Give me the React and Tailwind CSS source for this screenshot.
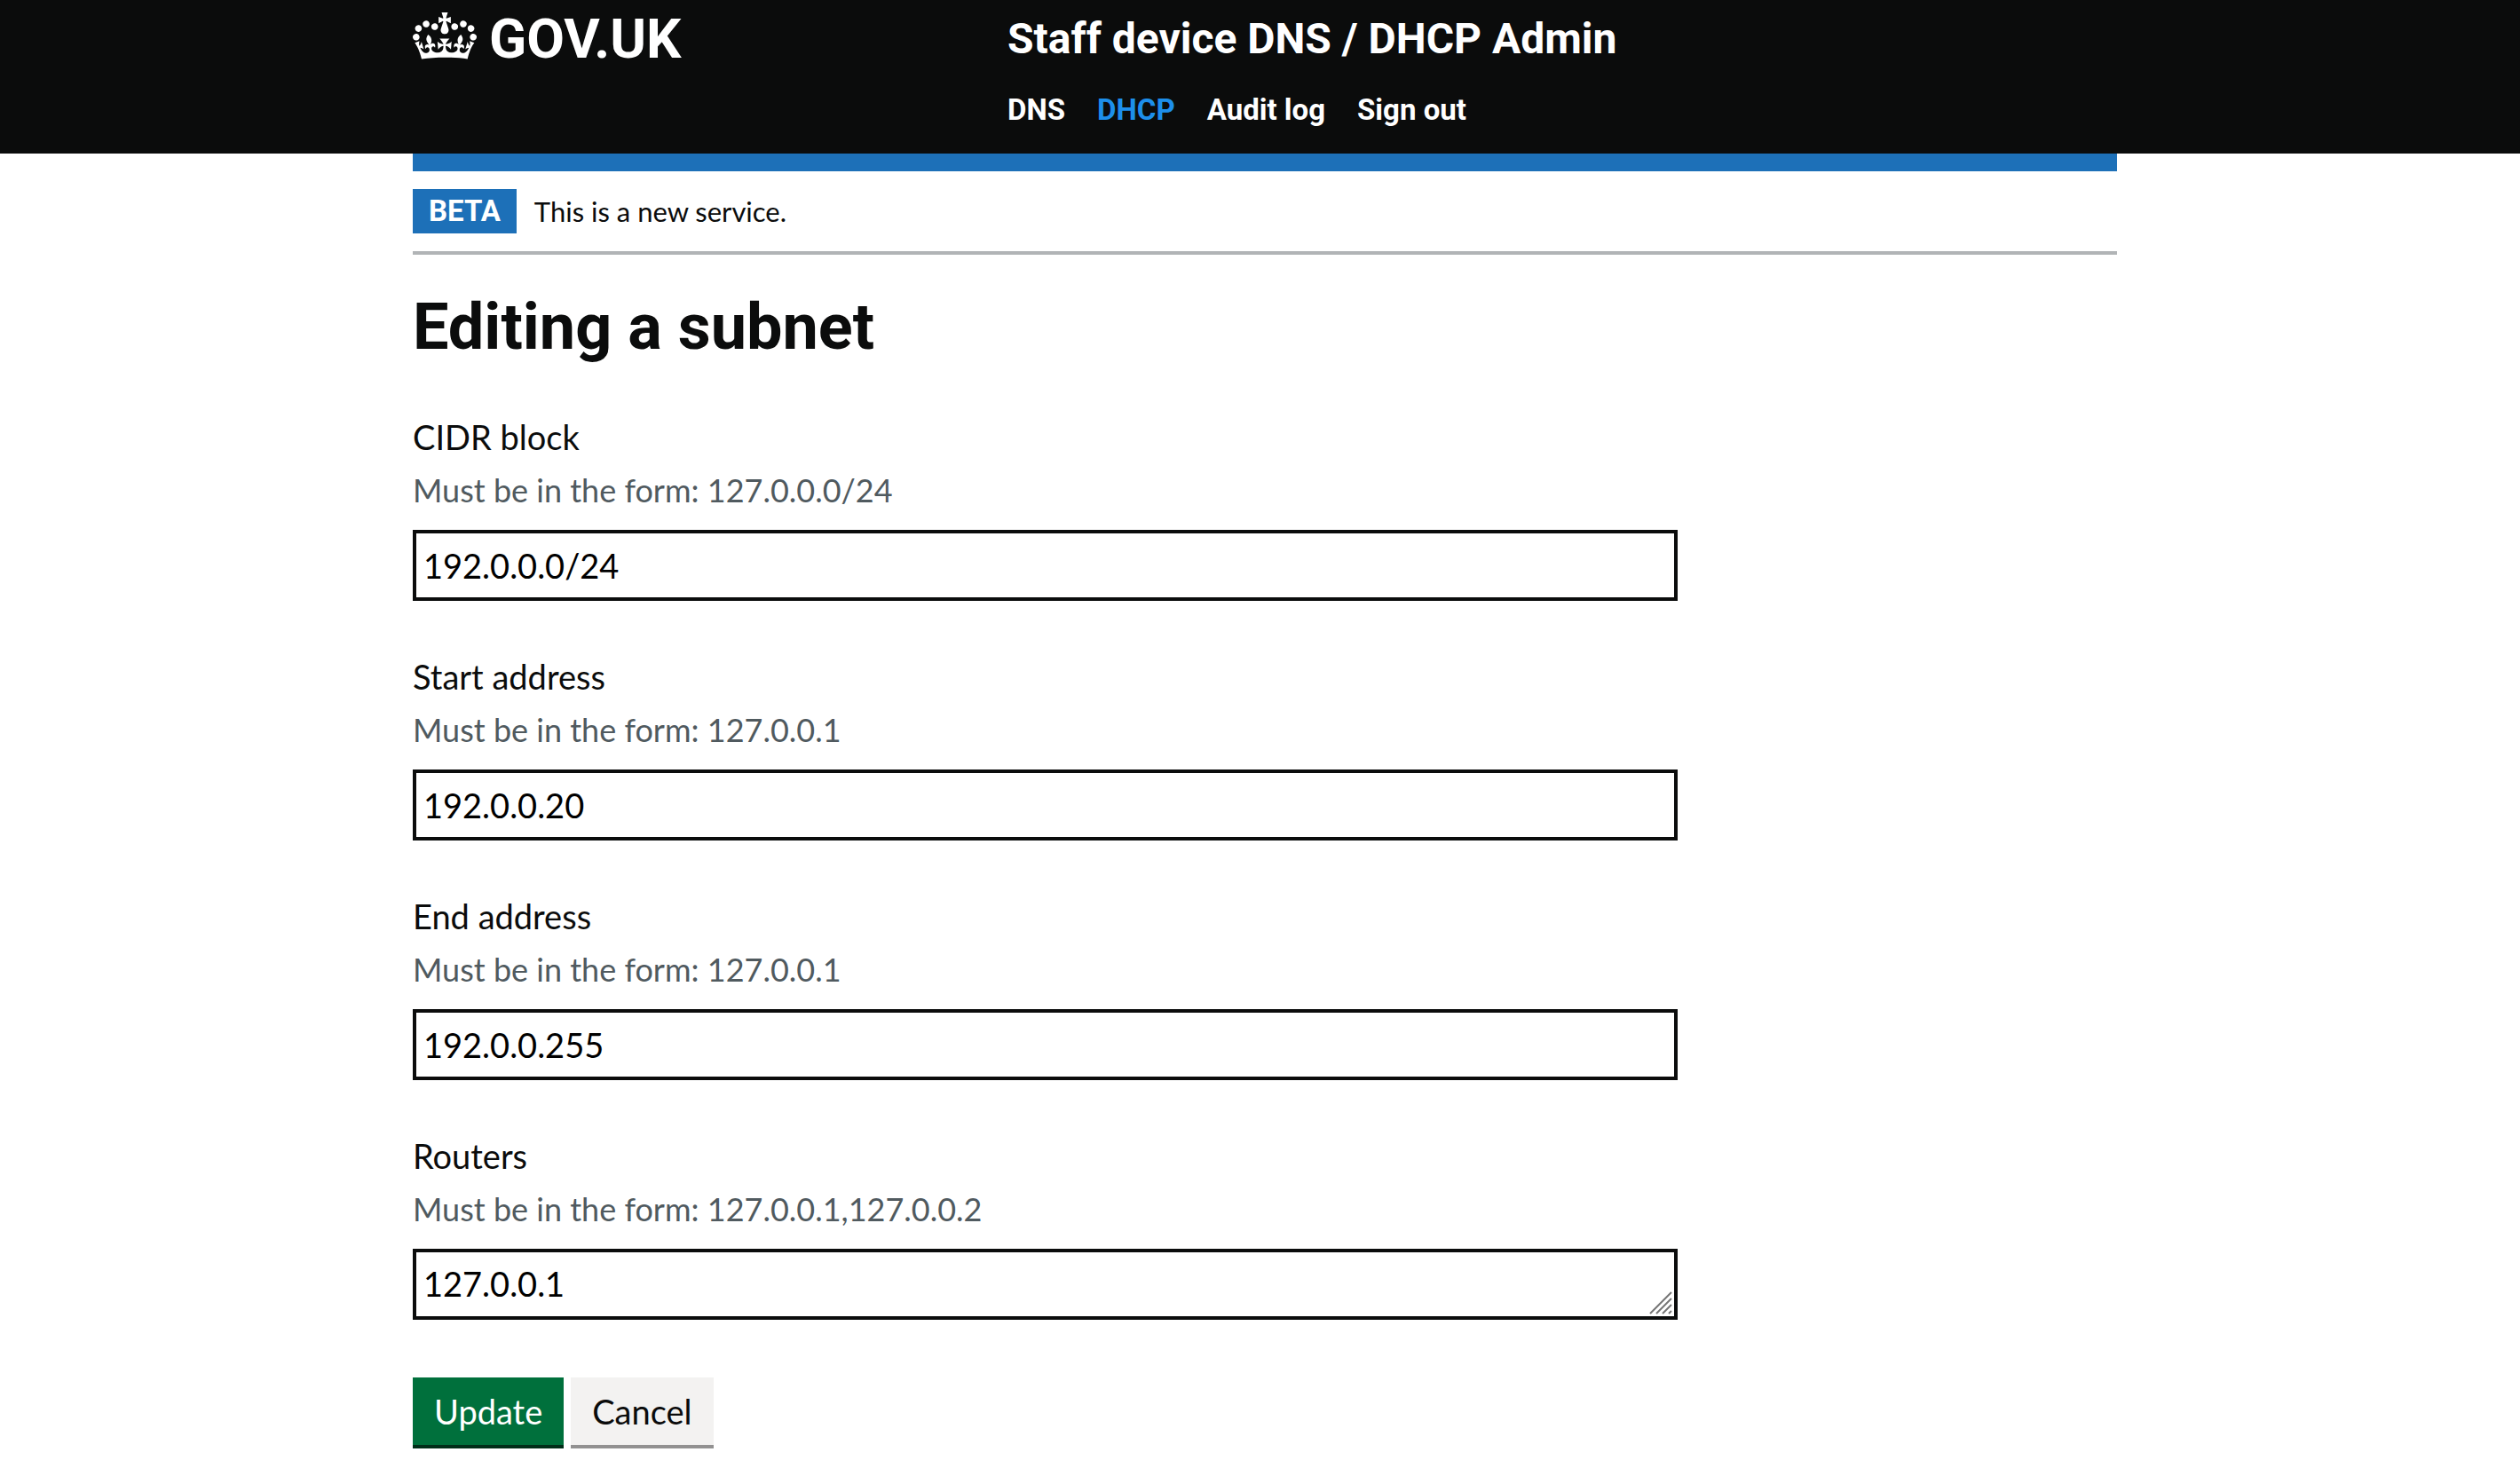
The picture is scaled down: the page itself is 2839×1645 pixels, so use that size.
const NAV = [
  { label: "DNS" },
  { label: "DHCP", current: true },
  { label: "Audit log" },
  { label: "Sign out" },
];

const FIELDS = [
  { id: "cidr", label: "CIDR block", hint: "Must be in the form: 127.0.0.0/24", value: "192.0.0.0/24" },
  { id: "start", label: "Start address", hint: "Must be in the form: 127.0.0.1", value: "192.0.0.20" },
  { id: "end", label: "End address", hint: "Must be in the form: 127.0.0.1", value: "192.0.0.255" },
  { id: "routers", label: "Routers", hint: "Must be in the form: 127.0.0.1,127.0.0.2", value: "127.0.0.1", multiline: true },
];

const CONTROL =
  "block h-20 w-full rounded-none border-4 border-[#0b0c0c] bg-white px-2 text-[38px] text-black outline-none";

function Crown() {
  return (
    <svg aria-hidden="true" viewBox="0 0 132 97" className="h-[53px] w-[72px] shrink-0 fill-current">
      <path
        fillRule="evenodd"
        d="M25 30.2c3.5 1.5 7.7-.2 9.1-3.7 1.5-3.6-.2-7.8-3.9-9.2-3.6-1.4-7.6.3-9.1 3.9-1.4 3.5.3 7.5 3.9 9zM9 39.5c3.6 1.5 7.8-.2 9.2-3.7 1.5-3.6-.2-7.8-3.9-9.1-3.6-1.5-7.6.2-9.1 3.8-1.4 3.5.3 7.5 3.8 9zM4.4 57.2c3.5 1.5 7.7-.2 9.1-3.8 1.5-3.6-.2-7.7-3.9-9.1-3.5-1.5-7.6.3-9.1 3.8-1.4 3.5.3 7.6 3.9 9.1zm38.3-21.4c3.5 1.5 7.7-.2 9.1-3.8 1.5-3.6-.2-7.7-3.9-9.1-3.6-1.5-7.6.3-9.1 3.8-1.3 3.6.4 7.7 3.9 9.1zm64.4-5.6c-3.6 1.5-7.8-.2-9.1-3.7-1.5-3.6.2-7.8 3.8-9.2 3.6-1.4 7.7.3 9.2 3.9 1.3 3.5-.4 7.5-3.9 9zm15.9 9.3c-3.6 1.5-7.7-.2-9.1-3.7-1.5-3.6.2-7.8 3.7-9.1 3.6-1.5 7.7.2 9.2 3.8 1.5 3.5-.3 7.5-3.8 9zm4.7 17.7c-3.6 1.5-7.8-.2-9.2-3.8-1.5-3.6.2-7.7 3.9-9.1 3.6-1.5 7.7.3 9.2 3.8 1.3 3.5-.4 7.6-3.9 9.1zM89.3 35.8c-3.6 1.5-7.8-.2-9.2-3.8-1.4-3.6.2-7.7 3.9-9.1 3.6-1.5 7.7.3 9.2 3.8 1.4 3.6-.3 7.7-3.9 9.1zM69.7 17.7l8.9 4.7V9.3l-8.9 2.8c-.2-.3-.5-.6-.9-.9L72.4 0H59.6l3.5 11.2c-.3.3-.6.5-.9.9l-8.8-2.8v13.1l8.8-4.7c.3.3.6.7.9.9l-5 15.4v.1c-.2.8-.4 1.6-.4 2.4 0 4.1 3.1 7.5 7 8.1h.2c.3 0 .7.1 1 .1.4 0 .7 0 1-.1h.2c4-.6 7.1-4.1 7.1-8.1 0-.8-.1-1.7-.4-2.4V34l-5.1-15.4c.4-.2.7-.6 1-.9zM66 92.8c16.9 0 32.8 1.1 47.1 3.2 4-16.9 8.9-26.7 14-33.5l-9.6-3.4c1 4.9 1.1 7.2 0 10.2-1.5-1.4-3-4.3-4.2-8.7L108.6 76c2.8-2 5-3.2 7.5-3.3-4.4 9.4-10 11.9-13.6 11.2-4.3-.8-6.3-4.6-5.6-7.9 1-4.7 5.7-5.9 8-.5 4.3-8.7-3-11.4-7.6-8.8 7.1-7.2 7.9-13.5 2.1-21.1-8 6.1-8.1 12.3-4.5 20.8-4.7-5.4-12.1-2.5-9.5 6.2 3.4-5.2 7.9-2 7.2 3.1-.6 4.3-6.4 7.8-13.5 7.2-10.3-.9-10.9-8-11.2-13.8 2.5-.5 7.1 1.8 11 7.3L80.2 60c-4.1 4.4-8 5.3-12.3 5.4 1.4-4.4 8-11.6 8-11.6H55.5s6.4 7.2 7.9 11.6c-4.2-.1-8-1-12.3-5.4l1.4 16.4c3.9-5.5 8.5-7.7 10.9-7.3-.3 5.8-.9 12.8-11.1 13.8-7.2.6-12.9-2.9-13.5-7.2-.7-5 3.8-8.3 7.1-3.1 2.7-8.7-4.6-11.6-9.4-6.2 3.7-8.5 3.6-14.7-4.6-20.8-5.8 7.6-5 13.9 2.2 21.1-4.7-2.6-11.9.1-7.7 8.8 2.3-5.5 7.1-4.2 8.1.5.7 3.3-1.3 7.1-5.7 7.9-3.5.7-9-1.8-13.5-11.2 2.5.1 4.7 1.3 7.5 3.3l-4.7-15.4c-1.2 4.4-2.7 7.2-4.3 8.7-1.1-3-.9-5.3 0-10.2l-9.5 3.4c5 6.9 9.9 16.7 14 33.5 14.8-2.1 30.8-3.2 47.7-3.2z"
      />
    </svg>
  );
}

function ResizeGrip() {
  return (
    <svg
      aria-hidden="true"
      viewBox="0 0 26 26"
      className="pointer-events-none absolute right-[6px] bottom-[6px] size-[26px]"
      fill="none"
      stroke="#757575"
      strokeWidth="2"
    >
      <path d="M1 25 25 1M8 25 25 8M15 25 25 15M22 25 25 22" />
    </svg>
  );
}

function Field({ id, label, hint, value, multiline }) {
  return (
    <div>
      <label htmlFor={id} className="block text-[38px] leading-[50px]">
        {label}
      </label>
      <p id={`${id}-hint`} className="mt-[10px] mb-5 text-4xl leading-[50px] text-[#505a5f]">
        {hint}
      </p>
      {multiline ? (
        <div className="relative">
          <textarea
            id={id}
            rows={1}
            defaultValue={value}
            aria-describedby={`${id}-hint`}
            className={`${CONTROL} resize-none overflow-hidden py-2 leading-[54px]`}
          />
          <ResizeGrip />
        </div>
      ) : (
        <input id={id} type="text" defaultValue={value} aria-describedby={`${id}-hint`} className={CONTROL} />
      )}
    </div>
  );
}

function Container({ className = "", children }) {
  return (
    <div className="pl-[11px]">
      <div className={`mx-auto max-w-[1920px] ${className}`}>{children}</div>
    </div>
  );
}

export default function App() {
  return (
    <div className="min-h-screen bg-white font-['Lato','Liberation_Sans',sans-serif] text-[#0b0c0c]">
      <header className="bg-[#0b0c0c] font-['Roboto','Liberation_Sans',sans-serif] font-bold text-white">
        <Container className="grid grid-cols-[670px_1fr] items-start pt-[14px] pb-[29px]">
          <a href="#home" className="flex items-start gap-[14px]">
            <Crown />
            <span className="text-[62px] leading-[60px]">GOV.UK</span>
          </a>
          <div>
            <a href="#service" className="block text-5xl leading-[60px]">
              Staff device DNS / DHCP Admin
            </a>
            <nav aria-label="Main" className="mt-[30px]">
              <ul className="flex gap-9 text-[33px] leading-10">
                {NAV.map((item) => (
                  <li key={item.label}>
                    <a href="#nav" className={item.current ? "text-[#1d8feb]" : "text-white"}>
                      {item.label}
                    </a>
                  </li>
                ))}
              </ul>
            </nav>
          </div>
        </Container>
      </header>

      <Container>
        <div className="h-5 bg-[#1d70b8]" />
        <div className="flex items-center gap-5 border-b-4 border-[#b1b4b6] py-5">
          <strong className="bg-[#1d70b8] px-[18px] font-['Roboto','Liberation_Sans',sans-serif] text-[33px] leading-[50px] font-bold text-white">
            BETA
          </strong>
          <span className="text-[31px] leading-[50px]">This is a new service.</span>
        </div>

        <main className="pt-10">
          <h1 className="font-['Roboto','Liberation_Sans',sans-serif] text-7xl leading-[84px] font-bold">
            Editing a subnet
          </h1>
          <form className="mt-14 max-w-[1425px]" onSubmit={(e) => e.preventDefault()}>
            <div className="flex flex-col gap-[60px]">
              {FIELDS.map((field) => (
                <Field key={field.id} {...field} />
              ))}
            </div>
            <div className="mt-[65px] flex gap-2 text-[38px] leading-[76px]">
              <button type="submit" className="border-b-4 border-[#002d18] bg-[#00703c] px-6 text-white">
                Update
              </button>
              <button type="button" className="border-b-4 border-[#929191] bg-[#f3f2f1] px-6">
                Cancel
              </button>
            </div>
          </form>
        </main>
      </Container>
    </div>
  );
}
